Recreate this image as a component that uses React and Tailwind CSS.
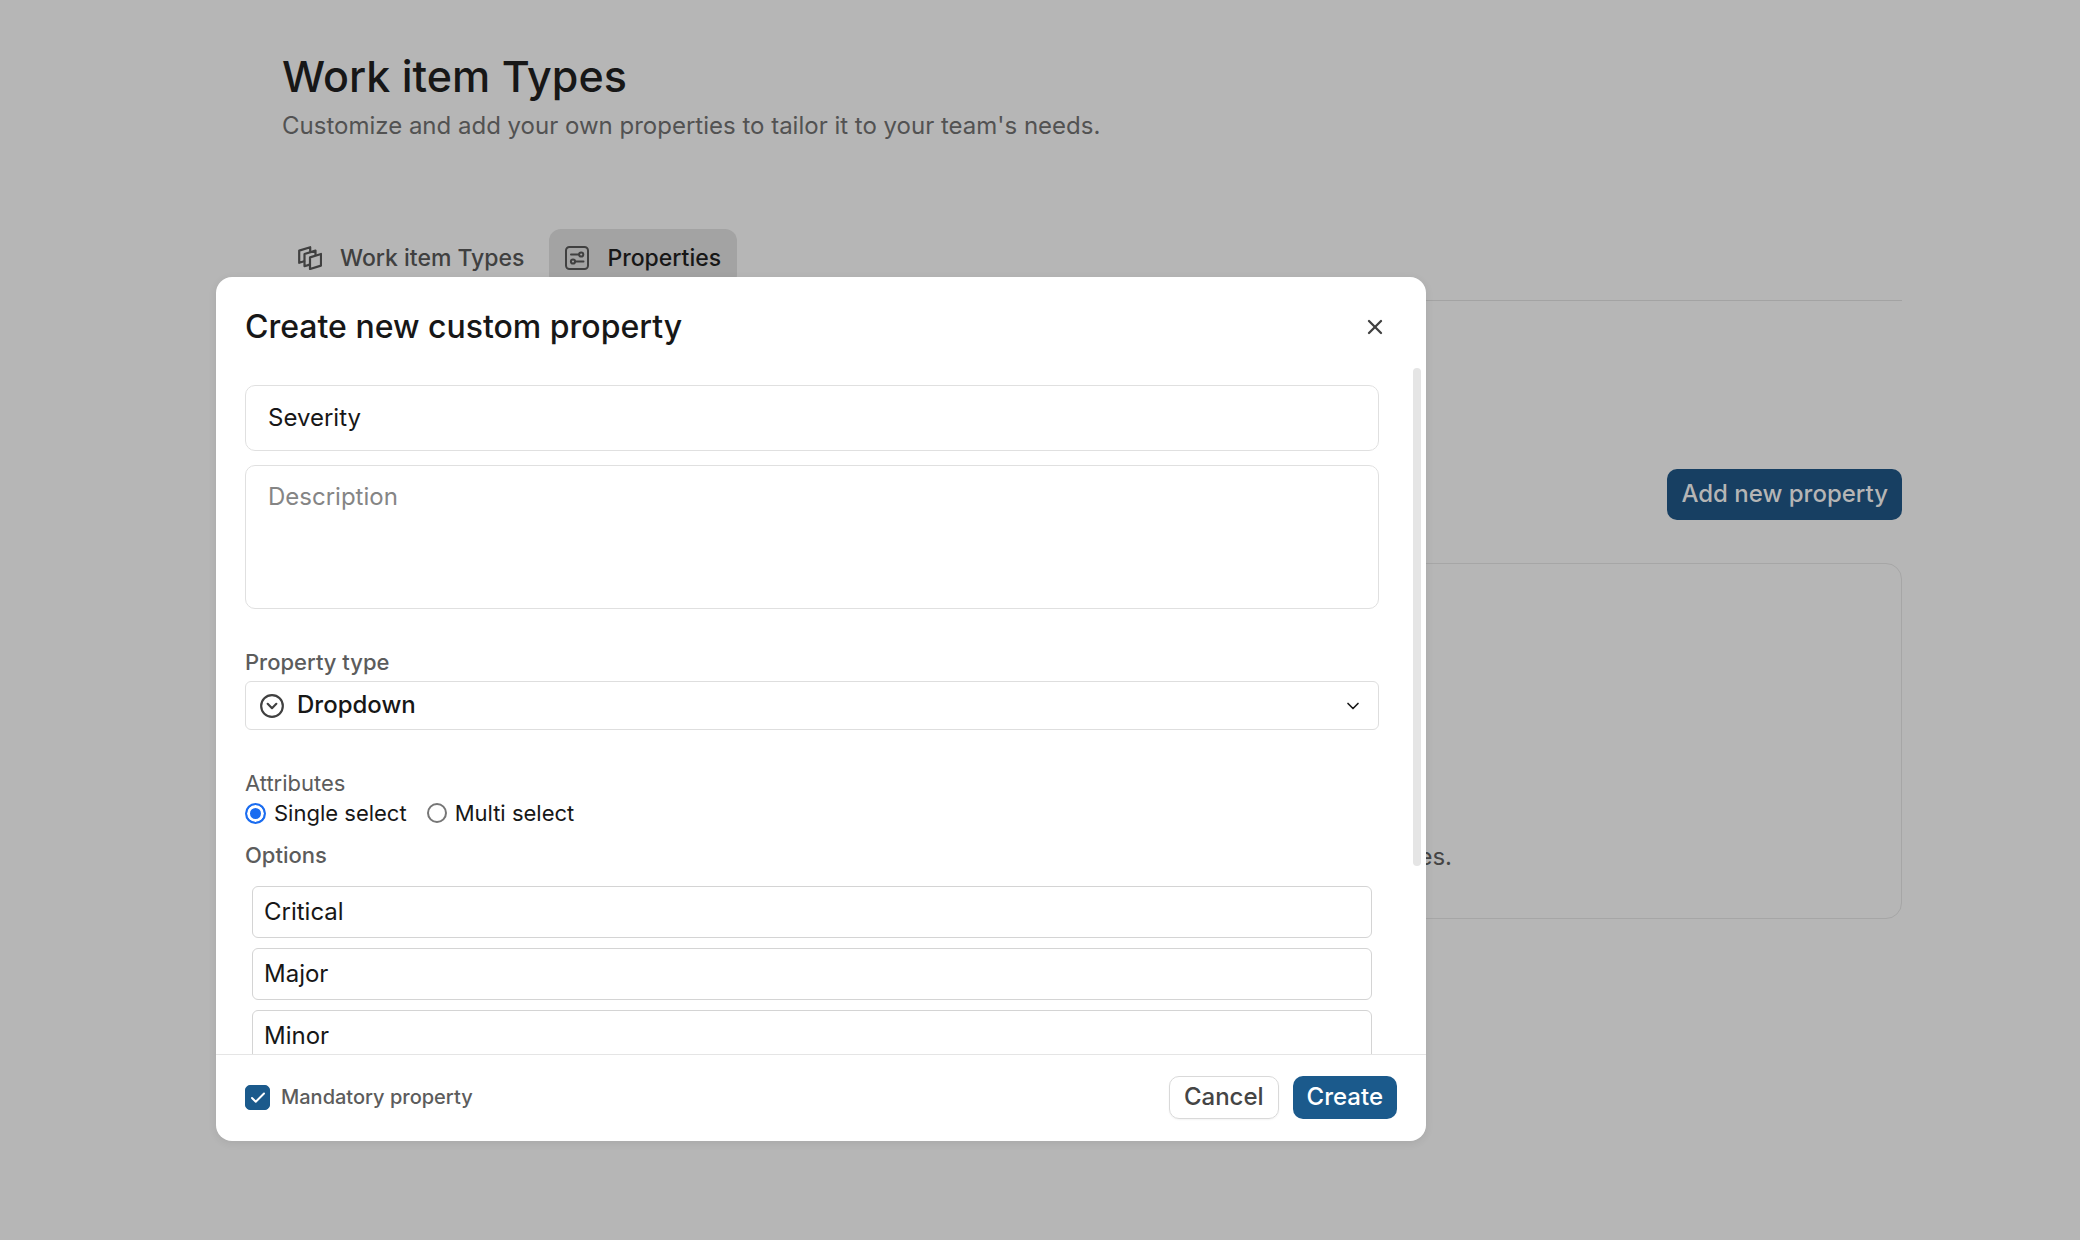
import React, { useState } from "react";
import { X, ChevronDown, CircleChevronDown, Check } from "lucide-react";

function LayersIcon({ className }) {
  return (
    <svg viewBox="0 0 24 24" className={className} fill="none" stroke="currentColor" strokeWidth="2.2" strokeLinejoin="round" strokeLinecap="round" aria-hidden="true">
      <path d="M12 11.4 23 8V19.6L12 23Z" />
      <path d="M11.6 18.6 6.5 20.2V8L17.5 4.6V9" />
      <path d="M6.2 15.2 1.2 16.8V4.6L12.2 1.2V5.6" />
    </svg>
  );
}

function PropertiesIcon({ className }) {
  return (
    <svg viewBox="0 0 24 24" className={className} fill="none" stroke="currentColor" strokeWidth="2" strokeLinecap="round" aria-hidden="true">
      <rect x="1" y="1" width="22" height="22" rx="3.5" />
      <path d="M6 8.5H14" />
      <circle cx="16.2" cy="8.5" r="2.1" />
      <path d="M18.5 15.5H10.2" />
      <circle cx="8" cy="15.5" r="2.1" />
    </svg>
  );
}

function Page() {
  return (
    <main className="flex flex-col pt-12 pr-[178px] pl-[282px]">
      <h1 className="text-[43px] leading-14 font-medium text-[#171717]">Work item Types</h1>
      <p className="mt-1 text-2xl leading-9 text-[#525252]">
        Customize and add your own properties to tailor it to your team's needs.
      </p>
      <nav className="mt-[85px] flex h-[72px] items-start gap-[9px] border-b border-[#a3a3a3]">
        <button className="flex h-[58px] items-center gap-[18px] rounded-xl px-4 text-[23px] font-medium text-[#404040]">
          <LayersIcon className="size-6" />
          Work item Types
        </button>
        <button className="flex h-[58px] items-center gap-[18px] rounded-xl bg-[#a3a3a3] px-4 text-[23px] font-medium text-[#171717]">
          <PropertiesIcon className="size-6 text-[#404040]" />
          Properties
        </button>
      </nav>
      <div className="mt-[168px] flex justify-end">
        <button className="h-[51px] rounded-[10px] bg-[#173f62] px-3.5 pb-0.5 text-2xl font-medium text-[#b5b5b5]">
          Add new property
        </button>
      </div>
      <section className="mt-[43px] flex h-[356px] items-end justify-center rounded-2xl border border-[#a6a6a6] pb-[45px]">
        <p className="text-2xl text-[#454545]">Properties you add here will be available on all work item types.</p>
      </section>
    </main>
  );
}

function Dialog() {
  const [name, setName] = useState("Severity");
  const [options, setOptions] = useState(["Critical", "Major", "Minor"]);
  const [mode, setMode] = useState("single");
  const radio =
    "size-5 appearance-none rounded-full border-2 border-[#767676] bg-white checked:size-[21px] checked:border-[#1a6cf0] checked:bg-[#1a6cf0] checked:shadow-[inset_0_0_0_3px_#ffffff]";

  return (
    <div
      role="dialog"
      aria-modal="true"
      aria-labelledby="dialog-title"
      className="flex w-full max-w-[1210px] flex-col overflow-hidden rounded-2xl bg-white shadow-[0_2px_8px_rgba(0,0,0,0.08)]"
    >
      <header className="flex h-[91px] items-center justify-between pt-2 pr-[39px] pl-[29px]">
        <h2 id="dialog-title" className="text-[32px] leading-10 font-medium text-[#171717]">
          Create new custom property
        </h2>
        <button aria-label="Close" className="text-[#404040]">
          <X className="size-6" strokeWidth={2.3} />
        </button>
      </header>

      <div className="relative">
        <div className="h-[686px] overflow-y-auto pt-[17px] pr-[47px] pl-[29px] [scrollbar-width:none]">
          <input
            aria-label="Property name"
            value={name}
            onChange={(e) => setName(e.target.value)}
            className="block h-[66px] w-full rounded-[10px] border border-[#e0e0e0] px-[22px] pb-0.5 text-2xl text-[#171717]"
          />
          <textarea
            aria-label="Description"
            placeholder="Description"
            className="mt-3.5 block h-36 w-full resize-none rounded-[10px] border border-[#e0e0e0] px-[22px] py-[15px] text-2xl text-[#171717] placeholder:text-[#858585]"
          />

          <label htmlFor="type" className="mt-[37px] mb-[3px] block text-[22px] leading-8 font-medium text-[#5c5c5c]">
            Property type
          </label>
          <div className="relative">
            <select
              id="type"
              className="block h-[49px] w-full appearance-none rounded-md border border-[#dedede] bg-white pb-0.5 pl-[51px] text-2xl font-medium text-[#171717]"
            >
              <option>Dropdown</option>
            </select>
            <CircleChevronDown className="pointer-events-none absolute top-3 left-3.5 size-[26px] text-[#404040]" />
            <ChevronDown className="pointer-events-none absolute top-[15px] right-4 size-5 text-[#171717]" />
          </div>

          <fieldset className="mt-[37px] text-[22px]">
            <legend className="leading-8 text-[#5c5c5c]">Attributes</legend>
            <div className="flex gap-5 leading-7 text-[#171717]">
              <label className="flex items-center gap-2">
                <input type="radio" name="mode" checked={mode === "single"} onChange={() => setMode("single")} className={radio} />
                Single select
              </label>
              <label className="flex items-center gap-2">
                <input type="radio" name="mode" checked={mode === "multi"} onChange={() => setMode("multi")} className={radio} />
                Multi select
              </label>
            </div>
          </fieldset>

          <h3 className="mt-3 text-[22px] leading-8 font-medium text-[#5c5c5c]">Options</h3>
          <div className="mt-[15px] flex flex-col gap-2.5 px-[7px] pb-10">
            {options.map((option, i) => (
              <input
                key={i}
                aria-label={`Option ${i + 1}`}
                value={option}
                onChange={(e) => setOptions(options.map((o, j) => (j === i ? e.target.value : o)))}
                className="block h-[52px] w-full shrink-0 rounded-md border border-[#d4d4d4] px-[11px] pb-0.5 text-2xl text-[#171717]"
              />
            ))}
          </div>
        </div>
        <div className="absolute top-0 right-[5px] h-[498px] w-2 rounded-full bg-[#e5e5e5]" />
      </div>

      <footer className="flex h-[87px] items-center justify-between border-t border-[#e5e5e5] pr-[29px] pb-0.5 pl-[29px]">
        <label className="flex items-center gap-[11px] text-xl font-medium text-[#5c5c5c]">
          <span className="relative flex">
            <input type="checkbox" defaultChecked className="peer size-[25px] appearance-none rounded-[5px] border border-[#a3a3a3] checked:border-[#1b5a8c] checked:bg-[#1b5a8c]" />
            <Check className="pointer-events-none absolute top-1 left-1 hidden size-[18px] text-white peer-checked:block" strokeWidth={2.6} />
          </span>
          Mandatory property
        </label>
        <div className="flex gap-3.5">
          <button className="h-[43px] rounded-[10px] border border-[#d9d9d9] px-3.5 text-2xl font-medium text-[#454545] shadow-xs">
            Cancel
          </button>
          <button className="h-[43px] rounded-[10px] bg-[#1b5a8c] px-3.5 text-2xl font-medium text-white">Create</button>
        </div>
      </footer>
    </div>
  );
}

export default function App() {
  return (
    <div className="relative min-h-screen bg-[#b6b6b6] font-['Inter',sans-serif] antialiased">
      <Page />
      <div className="absolute inset-0 flex items-start pt-[277px] pr-8 pl-[216px]">
        <Dialog />
      </div>
    </div>
  );
}
